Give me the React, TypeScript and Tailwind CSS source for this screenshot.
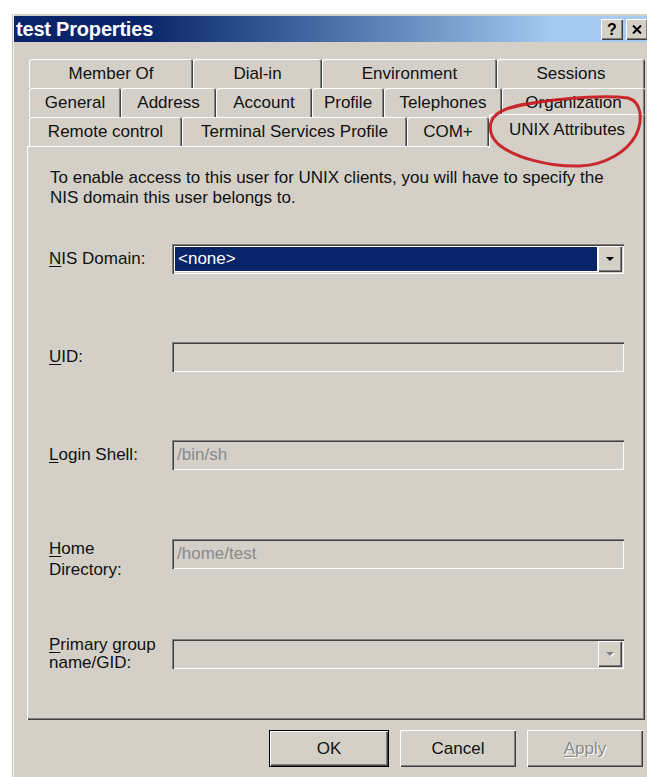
import React from "react";

const sunken =
  "shadow-[inset_1px_1px_0_#808080,inset_2px_2px_0_#404040,inset_-1px_-1px_0_#ffffff,inset_-2px_-2px_0_#d4d0c8]";
const raised =
  "shadow-[inset_1px_1px_0_#ffffff,inset_-1px_-1px_0_#404040,inset_-2px_-2px_0_#808080]";
const tabEdge =
  "shadow-[inset_1px_1px_0_#ffffff,inset_-1px_0_0_#404040,inset_-2px_0_0_#808080]";

const tabRows = [
  [
    { label: "Member Of", w: "w-[164px]" },
    { label: "Dial-in", w: "w-[129px]" },
    { label: "Environment", w: "w-[175px]" },
    { label: "Sessions", w: "w-[148px]" },
  ],
  [
    { label: "General", w: "w-[92px]" },
    { label: "Address", w: "w-[95px]" },
    { label: "Account", w: "w-[96px]" },
    { label: "Profile", w: "w-[72px]" },
    { label: "Telephones", w: "w-[118px]" },
    { label: "Organization", w: "w-[143px]" },
  ],
  [
    { label: "Remote control", w: "w-[153px]" },
    { label: "Terminal Services Profile", w: "w-[225px]" },
    { label: "COM+", w: "w-[82px]" },
    { label: "UNIX Attributes", w: "w-[156px]", active: true },
  ],
];

function DropArrow({ disabled }: { disabled?: boolean }) {
  return (
    <div className={`flex h-full w-[24px] items-center justify-center bg-[#d4d0c8] ${raised}`}>
      <svg width="10" height="6" viewBox="0 0 10 6">
        {disabled && <polygon points="2,2 10,2 6,6" fill="#ffffff" />}
        <polygon points="1,1 9,1 5,5" fill={disabled ? "#808080" : "#000000"} />
      </svg>
    </div>
  );
}

function Field({ value }: { value?: string }) {
  return (
    <div className={`flex h-[30px] w-[452px] items-center bg-[#d4d0c8] pl-[5px] text-[#8a8a8a] ${sunken}`}>
      {value}
    </div>
  );
}

// each form row is exactly as tall as its box; two-line labels spill over
function Row({ children, label, className }: { children: React.ReactNode; label: React.ReactNode; className: string }) {
  return (
    <div className={`flex h-[30px] items-center ${className}`}>
      <div className="w-[124px] shrink-0 pl-[1px]">{label}</div>
      {children}
    </div>
  );
}

export default function App() {
  return (
    <div className="relative h-[777px] w-[647px] overflow-hidden bg-white pl-[12px] pt-[14px] font-['Liberation_Sans',Arial,sans-serif] text-[17px] leading-[20px] text-[#111]">
      <div className="h-[780px] w-[640px] bg-[#d4d0c8] pl-[2px] pt-[2px] shadow-[inset_1px_0_0_#c4c2bc,inset_2px_0_0_#f4f4f2]">
        {/* caption */}
        <div className="flex h-[26px] w-[636px] items-center bg-linear-to-r from-[#0a246a] from-20% to-[#a6caf0] to-85% pl-[2px] pr-[2px]">
          <span className="text-[20px] font-bold tracking-[-0.2px] text-white">test Properties</span>
          <div className="ml-auto flex gap-[3px]">
            <div className={`flex h-[21px] w-[22px] items-center justify-center bg-[#d4d0c8] pt-[1px] text-[16px] font-bold leading-none text-black ${raised}`}>
              ?
            </div>
            <div className={`flex h-[21px] w-[22px] items-center justify-center bg-[#d4d0c8] ${raised}`}>
              <svg width="10" height="9" viewBox="0 0 10 9">
                <path d="M1 0.5 L9 8.5 M9 0.5 L1 8.5" stroke="#000" strokeWidth="2" />
              </svg>
            </div>
          </div>
        </div>

        <div className="pl-[13px] pt-[17px]">
          {/* tab strip */}
          <div className="ml-[2px] flex w-[616px] flex-col">
            {tabRows.map((row, i) => (
              <div key={i} className="flex h-[29px]">
                {row.map((t) =>
                  t.active ? (
                    <div
                      key={t.label}
                      className={`relative z-10 -mt-[3px] flex h-[34px] ${t.w} items-center justify-center rounded-t-[3px] bg-[#d4d0c8] pb-[2px] shadow-[inset_1px_1px_0_#ffffff,inset_-1px_0_0_#404040,inset_-2px_0_0_#808080]`}
                    >
                      {t.label}
                    </div>
                  ) : (
                    <div key={t.label} className={`flex h-full ${t.w} items-center justify-center rounded-t-[3px] ${tabEdge}`}>
                      {t.label}
                    </div>
                  )
                )}
              </div>
            ))}
          </div>

          {/* page */}
          <div className={`w-[618px] pb-[51px] pl-[21px] pt-[22px] ${raised}`}>
            <p className="pl-[2px]">
              To enable access to this user for UNIX clients, you will have to specify the
              <br />
              NIS domain this user belongs to.
            </p>

            <Row
              className="mt-[36px]"
              label={
                <>
                  <u className="underline-offset-2">N</u>IS Domain:
                </>
              }
            >
              <div className={`flex h-[30px] w-[452px] bg-white p-[2px] ${sunken}`}>
                <div className="m-[1px] flex flex-1 items-center bg-[#0a246a] pl-[3px] text-white">&lt;none&gt;</div>
                <DropArrow />
              </div>
            </Row>

            <Row
              className="mt-[68px]"
              label={
                <>
                  <u className="underline-offset-2">U</u>ID:
                </>
              }
            >
              <Field />
            </Row>

            <Row
              className="mt-[68px]"
              label={
                <>
                  <u className="underline-offset-2">L</u>ogin Shell:
                </>
              }
            >
              <Field value="/bin/sh" />
            </Row>

            <Row
              className="mt-[69px]"
              label={
                <div className="mt-[10px] leading-[21px]">
                  <u className="underline-offset-2">H</u>ome
                  <br />
                  Directory:
                </div>
              }
            >
              <Field value="/home/test" />
            </Row>

            <Row
              className="mt-[70px]"
              label={
                <div className="leading-[18px]">
                  <u className="underline-offset-2">P</u>rimary group
                  <br />
                  name/GID:
                </div>
              }
            >
              <div className={`flex h-[30px] w-[452px] bg-[#d4d0c8] p-[2px] ${sunken}`}>
                <div className="flex-1" />
                <DropArrow disabled />
              </div>
            </Row>
          </div>

          {/* dialog buttons */}
          <div className="mt-[10px] flex w-[618px] justify-end gap-[11px] pr-[2px]">
            <div className={`flex h-[37px] w-[120px] items-center justify-center border border-black bg-[#d4d0c8] ${raised}`}>
              OK
            </div>
            <div className={`flex h-[37px] w-[116px] items-center justify-center bg-[#d4d0c8] ${raised}`}>
              Cancel
            </div>
            <div className={`flex h-[37px] w-[116px] items-center justify-center bg-[#d4d0c8] text-[#8a8a8a] [text-shadow:1px_1px_0_#ffffff] ${raised}`}>
              <span>
                <u className="underline-offset-2">A</u>pply
              </span>
            </div>
          </div>
        </div>
      </div>

      {/* red marker loop around the UNIX Attributes tab */}
      <svg className="pointer-events-none absolute left-[480px] top-[88px] z-20" width="170" height="85" viewBox="0 0 170 85">
        <path
          d="M30 20 C60 12 120 6 148 10 C162 14 163 32 156 47 C147 64 125 77 100 78 C70 79 35 70 18 56 C8 46 8 34 16 27 C24 20 40 16 60 14"
          fill="none"
          stroke="#c8161b"
          strokeWidth="3"
          strokeLinecap="round"
          opacity="0.9"
        />
      </svg>
    </div>
  );
}
